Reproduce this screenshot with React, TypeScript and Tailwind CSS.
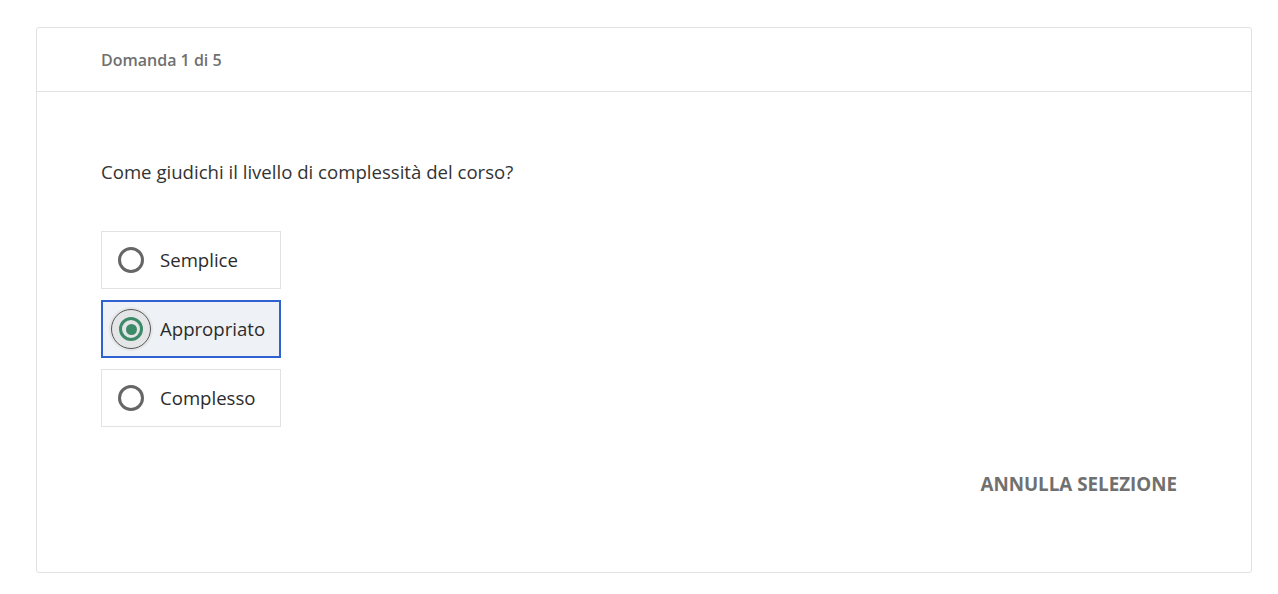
import { useState } from 'react';

const options = ['Semplice', 'Appropriato', 'Complesso'];

function Radio({ checked }: { checked: boolean }) {
  if (checked) {
    return (
      <span className="relative flex h-[26px] w-[26px] items-center justify-center">
        <span className="absolute -inset-[9px] rounded-full bg-[#e3e5e7]" />
        <span className="absolute -inset-[7px] rounded-full border border-[#555]" />
        <span className="relative flex h-6 w-6 items-center justify-center rounded-full border-[3px] border-[#3d8a69]">
          <span className="h-[11px] w-[11px] rounded-full bg-[#3d8a69]" />
        </span>
      </span>
    );
  }
  return <span className="h-[26px] w-[26px] rounded-full border-[3px] border-[#666]" />;
}

export default function App() {
  const [selected, setSelected] = useState(1);

  return (
    <div className="min-h-screen bg-white px-9 pt-[27px] font-['Open_Sans',sans-serif]">
      <div className="w-[1216px] rounded-[3px] border border-[#e2e2e2]">
        <div className="flex h-16 items-center border-b border-[#e2e2e2] pl-16">
          <span className="text-[16px] font-semibold text-[#707070]">Domanda 1 di 5</span>
        </div>
        <div className="pl-16 pr-[74px] pt-[68px] pb-[74px]">
          <p className="text-[18.6px] leading-6 text-[#333]">Come giudichi il livello di complessità del corso?</p>
          <div className="mt-[47px] flex flex-col gap-[11px]">
            {options.map((o, i) => {
              const on = i === selected;
              return (
                <button
                  key={o}
                  onClick={() => setSelected(i)}
                  className={
                    on
                      ? 'flex h-[58px] w-[180px] items-center gap-[16px] border-2 border-[#2f62d0] bg-[#eef2f6] pl-[15px] text-left'
                      : 'flex h-[58px] w-[180px] items-center gap-[16px] border border-[#e2e2e2] bg-white pl-[16px] text-left'
                  }
                >
                  <Radio checked={on} />
                  <span className="text-[18.6px] text-[#2b2b2b]">{o}</span>
                </button>
              );
            })}
          </div>
          <div className="mt-[43px] flex justify-end">
            <button className="text-[18.8px] font-bold uppercase text-[#707070]">Annulla selezione</button>
          </div>
        </div>
      </div>
    </div>
  );
}
